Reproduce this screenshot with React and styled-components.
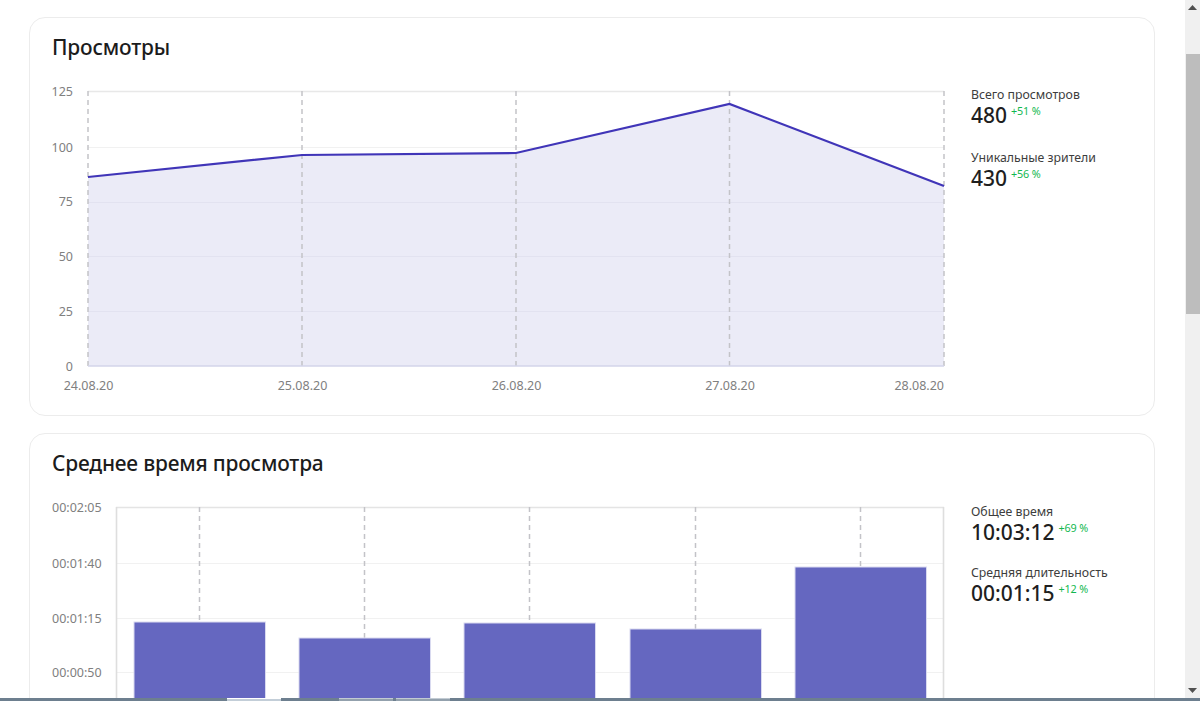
import React from 'react';
import styled, { createGlobalStyle } from 'styled-components';

const Global = createGlobalStyle`
  html, body { margin: 0; padding: 0; background: #fff; overflow: hidden; }
  #root { height: 701px; }
`;
const FONT = `"Noto Sans", "Open Sans", Roboto, sans-serif`;

const Screen = styled.div`
  width: 1200px; height: 701px; display: flex; flex-direction: column;
  font-family: ${FONT}; color: #1f1f1f; overflow: hidden;
`;
const Viewport = styled.div`display: flex; height: 698px; flex: none;`;
const Content = styled.main`
  flex: 1; min-width: 0; overflow: hidden; padding: 17px 30px 0 29px;
  display: flex; flex-direction: column; gap: 17px;
`;
const Card = styled.section`
  flex: none; box-sizing: border-box; width: 1126px; height: ${p => p.$h}px;
  border: 1px solid #ececec; border-radius: 16px; padding: 16px 22px 0 22px;
`;
const Title = styled.h2`
  margin: 0; height: 28px; font-size: 20.9px; line-height: 27px; font-weight: 500; letter-spacing: -0.18px; color: #1c1c1c;
`;
const Body = styled.div`display: flex; margin-top: ${p => p.$top}px; align-items: flex-start;`;
const ChartSvg = styled.svg`display: block; flex: none; width: 900px; overflow: hidden;`;
const Side = styled.aside`
  margin-left: 19px; display: flex; flex-direction: column; gap: ${p => p.$gap}px; padding-top: ${p => p.$top}px;
`;
const Stat = styled.div`display: flex; flex-direction: column; height: 48px;`;
const StatLabel = styled.div`font-size: 12.3px; line-height: ${p => p.$lh}px; color: #3d3d3d;`;
const StatRow = styled.div`display: flex; align-items: flex-start; gap: 4px;`;
const StatValue = styled.div`font-size: 21px; line-height: 24px; font-weight: 500; color: #1f1f1f;`;
const Delta = styled.span`font-size: 10.8px; line-height: 14px; margin-top: 1px; letter-spacing: -0.15px; color: #12b84f;`;

const Scrollbar = styled.div`
  flex: none; width: 15px; background: #f0f0f0; display: flex; flex-direction: column; align-items: center;
`;
const ArrowBox = styled.div`height: 15px; flex: none; display: flex; align-items: center; justify-content: center; width: 100%;`;
const Thumb = styled.div`width: 14px; height: 260px; margin-top: 39px; background: #bdbdbd; flex: none;`;
const Spacer = styled.div`flex: 1;`;

const Taskbar = styled.div`height: 3px; flex: none; background: #6d7f8f; display: flex; padding-left: 227px;`;
const Tab = styled.div`
  height: 3px; width: ${p => p.$w}px; margin-right: ${p => p.$m}px; box-sizing: border-box;
  background: ${p => (p.$active ? '#c3ced8' : '#93a1ad')};
  border-top: 1px solid ${p => (p.$active ? '#ffffff' : '#c2cbd3')};
`;

const Tri = ({ up }) => (
  <svg width="9" height="5" viewBox="0 0 9 5">
    <path d={up ? 'M0 5 L4.5 0 L9 5 Z' : 'M0 0 L4.5 5 L9 0 Z'} fill="#505050" />
  </svg>
);

const AXIS = { fontFamily: FONT, fontSize: 12.5, fill: '#808080' };
const GRID = '#f1f1f1';
const DASH = '#c3c3c8';

function LineChart() {
  const ox = 52, oy = 80;
  const xs = [88, 302, 516, 729.5, 944].map(v => v - ox);
  const ys = [177, 155, 153, 104, 186].map(v => v - oy);
  const gy = [91, 147, 202, 256, 311].map(v => v - oy);
  const base = 366 - oy;
  const labels = ['125', '100', '75', '50', '25', '0'];
  const dates = ['24.08.20', '25.08.20', '26.08.20', '27.08.20', '28.08.20'];
  const pts = xs.map((x, i) => `${x},${ys[i]}`).join(' ');
  return (
    <ChartSvg height="320" viewBox="0 0 900 320">
      {gy.map((y, i) => <line key={y} x1={xs[0]} x2={xs[4]} y1={y + 0.5} y2={y + 0.5} stroke={i === 0 ? '#e8e8e8' : GRID} strokeWidth={i === 0 ? 1.5 : 1} />)}
      <polygon points={`${xs[0]},${base} ${pts} ${xs[4]},${base}`} fill="#ebebf7" />
      {gy.slice(2).map(y => <line key={y} x1={xs[0]} x2={xs[4]} y1={y + 0.5} y2={y + 0.5} stroke="#e2e2f0" />)}
      {xs.map(x => <line key={x} x1={x} x2={x} y1={gy[0]} y2={base} stroke={DASH} strokeWidth="1.5" strokeDasharray="5 4" />)}
      <line x1={xs[0]} x2={xs[4]} y1={base} y2={base} stroke="#d3d5ea" strokeWidth="1.5" />
      <polyline points={pts} fill="none" stroke="#4035b8" strokeWidth="2.2" />
      {labels.map((t, i) => (
        <text key={t} x={21} y={[16, 71.5, 126, 181, 236, 291][i]} textAnchor="end" {...AXIS}>{t}</text>
      ))}
      {dates.map((d, i) => (
        <text key={d} x={i === 4 ? xs[4] : xs[i] + 0.5} y={310} textAnchor={i === 4 ? 'end' : 'middle'} {...AXIS}>{d}</text>
      ))}
    </ChartSvg>
  );
}

function BarChart() {
  const ox = 52, oy = 496;
  const gy = [507, 563, 618, 672].map(v => v - oy);
  const labels = ['00:02:05', '00:01:40', '00:01:15', '00:00:50'];
  const bars = [[134, 622], [299, 638], [464, 623], [630, 629], [795, 567]];
  return (
    <ChartSvg height="210" viewBox="0 0 900 210">
      {gy.map((y, i) => <line key={y} x1={64} x2={892} y1={y + 0.5} y2={y + 0.5} stroke={i === 0 ? '#e4e4e4' : GRID} strokeWidth={i === 0 ? 1.5 : 1} />)}
      <line x1={64.5} x2={64.5} y1={11} y2={210} stroke="#dedede" strokeWidth="1.6" />
      <line x1={891.5} x2={891.5} y1={11} y2={210} stroke="#dedede" strokeWidth="1.6" />
      {bars.map(([x, t]) => (
        <g key={x}>
          <line x1={x + 65.5 - ox} x2={x + 65.5 - ox} y1={11} y2={t - oy} stroke={DASH} strokeWidth="1.5" strokeDasharray="5 4" />
          <rect x={x - ox} y={t - oy} width="131.5" height={210} fill="#6567c0" stroke="#d9daf0" strokeWidth="1" />
        </g>
      ))}
      {labels.map((t, i) => (
        <text key={t} x={0} y={gy[i] + 5} {...AXIS}>{t}</text>
      ))}
    </ChartSvg>
  );
}

const StatBlock = ({ label, value, delta, lh = 17 }) => (
  <Stat>
    <StatLabel $lh={lh}>{label}</StatLabel>
    <StatRow>
      <StatValue>{value}</StatValue>
      <Delta>{delta}</Delta>
    </StatRow>
  </Stat>
);

export default function App() {
  return (
    <Screen>
      <Global />
      <Viewport>
        <Content>
          <Card $h={399}>
            <Title>Просмотры</Title>
            <Body $top={18}>
              <LineChart />
              <Side $top={6} $gap={15}>
                <StatBlock label="Всего просмотров" value="480" delta="+51 %" />
                <StatBlock label="Уникальные зрители" value="430" delta="+56 %" />
              </Side>
            </Body>
          </Card>
          <Card $h={400}>
            <Title>Среднее время просмотра</Title>
            <Body $top={18}>
              <BarChart />
              <Side $top={8} $gap={13}>
                <StatBlock label="Общее время" value="10:03:12" delta="+69 %" lh={16} />
                <StatBlock label="Средняя длительность" value="00:01:15" delta="+12 %" lh={16} />
              </Side>
            </Body>
          </Card>
        </Content>
        <Scrollbar>
          <ArrowBox><Tri up /></ArrowBox>
          <Thumb />
          <Spacer />
          <ArrowBox><Tri /></ArrowBox>
        </Scrollbar>
      </Viewport>
      <Taskbar>
        <Tab $w={54} $m={58} $active />
        <Tab $w={54} $m={3} />
        <Tab $w={54} $m={0} />
      </Taskbar>
    </Screen>
  );
}
